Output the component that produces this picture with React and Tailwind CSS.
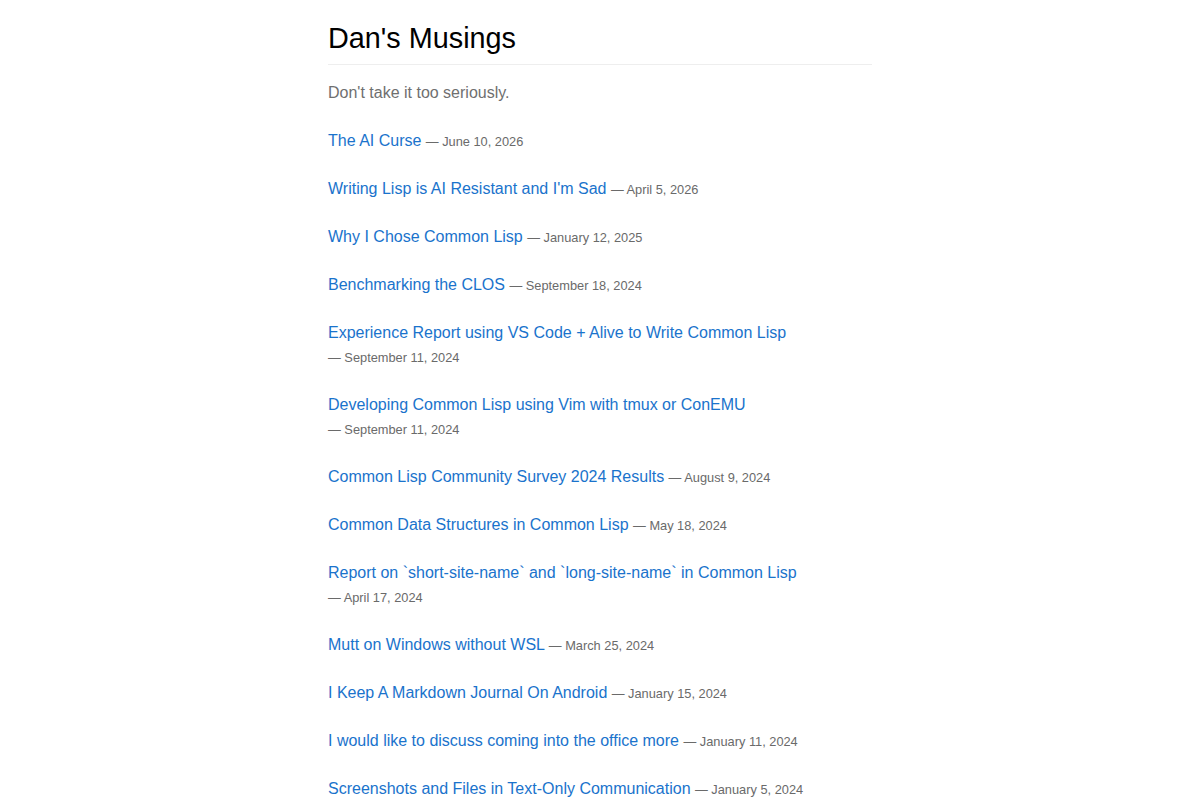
const posts = [
  { title: "The AI Curse", date: "June 10, 2026" },
  { title: "Writing Lisp is AI Resistant and I'm Sad", date: "April 5, 2026" },
  { title: "Why I Chose Common Lisp", date: "January 12, 2025" },
  { title: "Benchmarking the CLOS", date: "September 18, 2024" },
  { title: "Experience Report using VS Code + Alive to Write Common Lisp", date: "September 11, 2024" },
  { title: "Developing Common Lisp using Vim with tmux or ConEMU", date: "September 11, 2024" },
  { title: "Common Lisp Community Survey 2024 Results", date: "August 9, 2024" },
  { title: "Common Data Structures in Common Lisp", date: "May 18, 2024" },
  { title: "Report on `short-site-name` and `long-site-name` in Common Lisp", date: "April 17, 2024" },
  { title: "Mutt on Windows without WSL", date: "March 25, 2024" },
  { title: "I Keep A Markdown Journal On Android", date: "January 15, 2024" },
  { title: "I would like to discuss coming into the office more", date: "January 11, 2024" },
  { title: "Screenshots and Files in Text-Only Communication", date: "January 5, 2024" },
];

export default function App() {
  return (
    <div className="min-h-screen bg-white font-['Liberation_Sans',Arial,sans-serif]">
      <main className="mx-auto w-[544px] pt-[21px]">
        <h1 className="border-b border-[#eeeeee] pb-2 text-[28.8px] leading-[1.2] font-normal text-black">
          Dan's Musings
        </h1>
        <p className="mt-4 text-[16px] leading-6 text-[#6f6f6f]">Don't take it too seriously.</p>
        <ul className="mt-6 flex flex-col gap-6">
          {posts.map((p) => (
            <li key={p.title} className="text-[16px] leading-6">
              <a href="#" className="text-[#1a73cc]">
                {p.title}
              </a>{" "}
              <span className="whitespace-nowrap text-[12.8px] leading-none text-[#6a6a6a]">
                — {p.date}
              </span>
            </li>
          ))}
        </ul>
      </main>
    </div>
  );
}
